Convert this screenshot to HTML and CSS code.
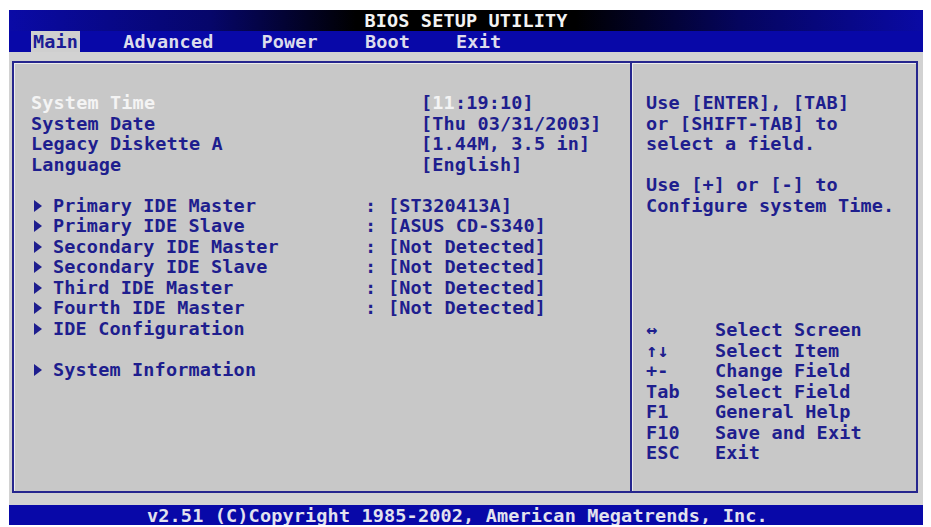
FILE: index.html
```html
<!DOCTYPE html>
<html lang="en">
  <head>
    <meta charset="UTF-8" />
    <meta name="viewport" content="width=device-width, initial-scale=1.0" />
    <title>BIOS Setup Utility</title>
    <link rel="stylesheet" href="styles.css">
  </head>
  <body>
    <div class="screen">
      <div class="title">BIOS SETUP UTILITY</div>

      <div class="menubar">
        <span class="tab active">Main</span>
        <span class="tab tab-advanced">Advanced</span>
        <span class="tab tab-power">Power</span>
        <span class="tab tab-boot">Boot</span>
        <span class="tab tab-exit">Exit</span>
      </div>

      <div class="desk">
        <div class="frame">
          <div class="main-panel">
            <div class="field selected">
              <span class="label">System Time</span>
              <span class="value">[<span class="cursor">11</span>:19:10]</span>
            </div>
            <div class="field">
              <span class="label">System Date</span>
              <span class="value">[Thu 03/31/2003]</span>
            </div>
            <div class="field">
              <span class="label">Legacy Diskette A</span>
              <span class="value">[1.44M, 3.5 in]</span>
            </div>
            <div class="field">
              <span class="label">Language</span>
              <span class="value">[English]</span>
            </div>

            <div class="spacer"></div>

            <div class="submenu">
              <span class="arrow"></span>
              <span class="label">Primary IDE Master</span>
              <span class="colon">:</span>
              <span class="value">[ST320413A]</span>
            </div>
            <div class="submenu">
              <span class="arrow"></span>
              <span class="label">Primary IDE Slave</span>
              <span class="colon">:</span>
              <span class="value">[ASUS CD-S340]</span>
            </div>
            <div class="submenu">
              <span class="arrow"></span>
              <span class="label">Secondary IDE Master</span>
              <span class="colon">:</span>
              <span class="value">[Not Detected]</span>
            </div>
            <div class="submenu">
              <span class="arrow"></span>
              <span class="label">Secondary IDE Slave</span>
              <span class="colon">:</span>
              <span class="value">[Not Detected]</span>
            </div>
            <div class="submenu">
              <span class="arrow"></span>
              <span class="label">Third IDE Master</span>
              <span class="colon">:</span>
              <span class="value">[Not Detected]</span>
            </div>
            <div class="submenu">
              <span class="arrow"></span>
              <span class="label">Fourth IDE Master</span>
              <span class="colon">:</span>
              <span class="value">[Not Detected]</span>
            </div>
            <div class="submenu">
              <span class="arrow"></span>
              <span class="label">IDE Configuration</span>
            </div>

            <div class="spacer"></div>

            <div class="submenu">
              <span class="arrow"></span>
              <span class="label">System Information</span>
            </div>
          </div>

          <div class="help-panel">
            <div class="help-text">
              <div>Use [ENTER], [TAB]</div>
              <div>or [SHIFT-TAB] to</div>
              <div>select a field.</div>
              <div class="spacer"></div>
              <div>Use [+] or [-] to</div>
              <div>Configure system Time.</div>
            </div>

            <div class="keys">
              <span class="key">&harr;</span><span>Select Screen</span>
              <span class="key">&uarr;&darr;</span><span>Select Item</span>
              <span class="key">+-</span><span>Change Field</span>
              <span class="key">Tab</span><span>Select Field</span>
              <span class="key">F1</span><span>General Help</span>
              <span class="key">F10</span><span>Save and Exit</span>
              <span class="key">ESC</span><span>Exit</span>
            </div>
          </div>
        </div>
      </div>

      <div class="footer">v2.51 (C)Copyright 1985-2002, American Megatrends, Inc.</div>
    </div>
  </body>
</html>
```

FILE: styles.css
```css
body {
  margin: 0;
  background: #ffffff;
  font-family: "DejaVu Sans Mono", "Liberation Mono", monospace;
  font-weight: bold;
  font-size: 18.5px;
  letter-spacing: 0.15px;
}

.screen {
  width: 914px;
  height: 515px;
  margin: 10px 0 0 9px;
  display: flex;
  flex-direction: column;
}

.title {
  height: 21px;
  line-height: 21px;
  text-align: center;
  color: #f2f2f2;
  background: linear-gradient(to right, #0a0aa6 0%, #06066a 22%, #000000 38%, #000000 62%, #05055e 80%, #0a0aa4 100%);
}

.menubar {
  height: 21px;
  line-height: 22px;
  background: #0808a8;
  display: flex;
  padding-left: 22px;
  color: #dcdcec;
}

.tab {
  padding: 0 2px;
}

.tab.active {
  background: #cfcfcf;
  color: #1c1c96;
}

.tab-advanced { margin-left: 41px; }
.tab-power { margin-left: 44px; }
.tab-boot { margin-left: 43px; }
.tab-exit { margin-left: 42px; }

.desk {
  background: #d2d2d2;
  padding: 9px 5px 12px 3px;
}

.frame {
  height: 432px;
  box-sizing: border-box;
  border: 2px solid #26268e;
  box-shadow: inset 1px 1px 0 #ececec;
  background: #c8c8c8;
  display: flex;
  color: #1e1e8e;
  line-height: 20.5px;
}

.main-panel {
  width: 618px;
  box-sizing: border-box;
  padding: 30px 0 0 17px;
  border-right: 2px solid #26268e;
}

.help-panel {
  flex: 1;
  padding: 30px 0 0 14px;
  display: flex;
  flex-direction: column;
  box-shadow: inset 1px 0 0 #ececec;
}

.spacer {
  height: 20.5px;
}

.field {
  display: grid;
  grid-template-columns: 390px auto;
}

.field.selected .label {
  color: #f4f4f4;
}

.cursor {
  color: #f4f4f4;
}

.submenu {
  display: grid;
  grid-template-columns: 22px 312px 23px auto;
  align-items: center;
}

.arrow {
  width: 0;
  height: 0;
  margin-left: 3px;
  border-left: 8px solid #1e1e8e;
  border-top: 6px solid transparent;
  border-bottom: 6px solid transparent;
}

.keys {
  margin-top: 104px;
  display: grid;
  grid-template-columns: 69px auto;
}

.footer {
  height: 20px;
  line-height: 21px;
  background: #0808a8;
  color: #e2e2ee;
  padding-left: 138px;
}
```
